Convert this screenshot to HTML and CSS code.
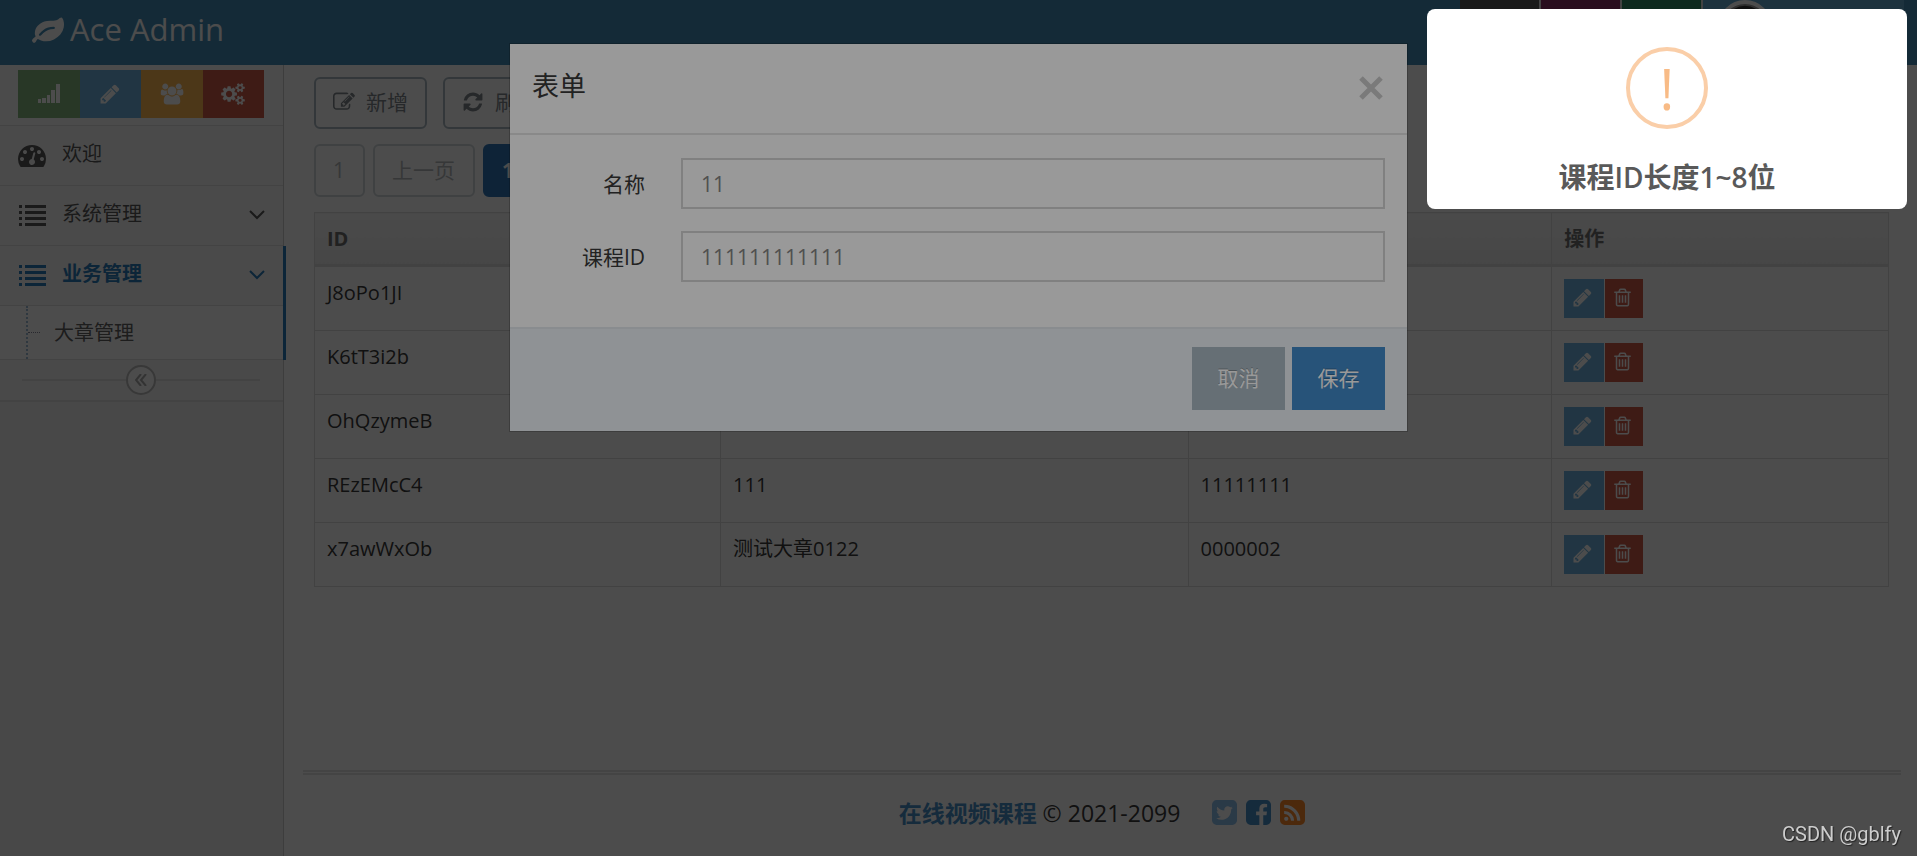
FILE: index.html
```html
<!DOCTYPE html>
<html lang="zh-CN">
<head>
<meta charset="utf-8">
<title>Ace Admin</title>
<link rel="stylesheet" href="styles.css">
</head>
<body>
<svg class="sprite" aria-hidden="true">
  <symbol id="i-leaf" viewBox="0 0 1792 1792"><path d="M1280 832q0-26-19-45t-45-19q-172 0-318 49.5t-259.5 134-235.5 219.5q-19 21-19 45 0 26 19 45t45 19q24 0 45-19 27-24 74-71t67-66q137-124 268.5-176t313.5-52q26 0 45-19t19-45zm512-198q0 95-20 193-46 224-184.5 383t-357.5 268q-214 108-438 108-148 0-286-47-15-5-88-42t-96-37q-16 0-39.5 32t-45 70-52.5 70-60 32q-43 0-63.5-17.5t-45.5-59.5q-2-4-6-11t-5.5-10-3-9.5-1.5-13.5q0-35 31-73.5t68-65.5 68-56 31-48q0-4-14-38t-16-44q-9-51-9-104 0-115 43.5-220t119-184.5 170.5-139 204-95.5q55-18 145-25.5t179.5-9 178.5-6 163.5-24 113.5-56.5l29.5-29.5 29.5-28 27-20 36.5-16 43.5-4.5q39 0 70.5 46t47.5 112 24 124 8 96z"/></symbol>
  <symbol id="i-signal" viewBox="0 0 22 22"><path d="M0 16h3v4H0zM4 15h4v5H4zM9 12h3v8H9zM13 7h4v13h-4zM18 1h4v19h-4z"/></symbol>
  <symbol id="i-pencil" viewBox="0 0 1792 1792"><path d="M491 1536l91-91-235-235-91 91v107h128v128h107zm523-928q0-22-22-22-10 0-17 7l-542 542q-7 7-7 17 0 22 22 22 10 0 17-7l542-542q7-7 7-17zm-54-192l416 416-832 832h-416v-416zm683 96q0 53-37 90l-166 166-416-416 166-165q36-38 90-38 53 0 91 38l235 234q37 39 37 91z"/></symbol>
  <symbol id="i-users" viewBox="0 0 2048 1792"><path d="M657 896q-162 5-265 128h-134q-82 0-138-40.5t-56-118.5q0-353 124-353 6 0 43.5 21t97.5 42.5 119 21.5q67 0 133-23-5 37-5 66 0 159 81 256zm1071 637q0 120-73 189.5t-194 69.5h-874q-121 0-194-69.5t-73-189.5q0-53 3.500-103.500t14-109 26.500-108.500 43-97.500 62-81 85.500-53.500 111.500-20q10 0 43 21.500t73 48 107 48 135 21.500 135-21.500 107-48 73-48 43-21.500q61 0 111.500 20t85.500 53.500 62 81 43 97.500 26.500 108.500 14 109 3.500 103.500zm-1024-1277q0 106-75 181t-181 75-181-75-75-181 75-181 181-75 181 75 75 181zm704 384q0 159-112.500 271.500t-271.500 112.500-271.500-112.500-112.500-271.500 112.500-271.500 271.500-112.500 271.500 112.500 112.500 271.500zm576 225q0 78-56 118.500t-138 40.500h-134q-103-123-265-128 93-143 93-302 0-29-5-66 66 23 133 23 59 0 119-21.500t97.500-42.500 43.500-21q124 0 124 353zm-128-609q0 106-75 181t-181 75-181-75-75-181 75-181 181-75 181 75 75 181z"/></symbol>
  <symbol id="i-cogs" viewBox="0 0 1920 1792"><path d="M896 896q0-106-75-181t-181-75-181 75-75 181 75 181 181 75 181-75 75-181zm768 512q0-52-38-90t-90-38-90 38-38 90q0 53 37.500 90.500t90.500 37.500 90.500-37.500 37.500-90.500zm0-1024q0-52-38-90t-90-38-90 38-38 90q0 53 37.500 90.500t90.500 37.500 90.500-37.500 37.500-90.500zm-384 421v185q0 10-7 19.500t-16 10.500l-155 24q-11 35-32 76 34 48 90 115 7 11 7 20 0 12-7 19-23 30-82.500 89.500t-78.500 59.500q-11 0-21-7l-115-90q-37 19-77 31-11 108-23 155-7 24-30 24h-186q-11 0-20-7.500t-10-17.500l-23-153q-34-10-75-31l-118 89q-7 7-20 7-11 0-21-8-144-133-144-160 0-9 7-19 10-14 41-53t47-61q-23-44-35-82l-152-24q-10-1-17-9.500t-7-19.500v-185q0-10 7-19.500t16-10.500l155-24q11-35 32-76-34-48-90-115-7-11-7-20 0-12 7-20 22-30 82-89t79-59q11 0 21 7l115 90q34-18 77-32 11-108 23-154 7-24 30-24h186q11 0 20 7.500t10 17.500l23 153q34 10 75 31l118-89q8-7 20-7 11 0 21 8 144 133 144 160 0 8-7 19-12 16-42 54t-45 60q23 48 34 82l152 23q10 2 17 10.500t7 19.500zm640 533v140q0 16-149 31-12 27-30 52 51 113 51 138 0 4-4 7-122 71-124 71-8 0-46-47t-52-68q-20 2-30 2t-30-2q-14 21-52 68t-46 47q-2 0-124-71-4-3-4-7 0-25 51-138-18-25-30-52-149-15-149-31v-140q0-16 149-31 13-29 30-52-51-113-51-138 0-4 4-7 4-2 35-20t59-34 30-16q8 0 46 46.500t52 67.500q20-2 30-2t30 2q51-71 92-112l6-2q4 0 124 70 4 3 4 7 0 25-51 138 17 23 30 52 149 15 149 31zm0-1024v140q0 16-149 31-12 27-30 52 51 113 51 138 0 4-4 7-122 71-124 71-8 0-46-47t-52-68q-20 2-30 2t-30-2q-14 21-52 68t-46 47q-2 0-124-71-4-3-4-7 0-25 51-138-18-25-30-52-149-15-149-31v-140q0-16 149-31 13-29 30-52-51-113-51-138 0-4 4-7 4-2 35-20t59-34 30-16q8 0 46 46.500t52 67.500q20-2 30-2t30 2q51-71 92-112l6-2q4 0 124 70 4 3 4 7 0 25-51 138 17 23 30 52 149 15 149 31z"/></symbol>
  <symbol id="i-gauge" viewBox="0 0 1792 1792"><path d="M384 1152q0-53-37.500-90.500t-90.500-37.500-90.500 37.500-37.500 90.500 37.500 90.500 90.500 37.500 90.500-37.500 37.500-90.500zm192-448q0-53-37.500-90.500t-90.500-37.500-90.500 37.500-37.500 90.500 37.500 90.500 90.500 37.500 90.500-37.500 37.500-90.500zm428 481l101-382q6-26-7.500-48.500t-38.500-29.500-48 6.500-30 39.500l-101 382q-60 5-107 43.500t-63 98.500q-20 77 20 146t117 89 146-20 89-117q16-60-6-117t-72-91zm660-33q0-53-37.500-90.500t-90.500-37.500-90.500 37.500-37.500 90.500 37.500 90.500 90.500 37.500 90.500-37.500 37.500-90.500zm-640-640q0-53-37.500-90.500t-90.500-37.500-90.500 37.500-37.500 90.500 37.500 90.500 90.500 37.500 90.500-37.500 37.500-90.500zm448 192q0-53-37.500-90.500t-90.500-37.500-90.500 37.500-37.500 90.500 37.500 90.500 90.500 37.500 90.500-37.500 37.500-90.500zm320 448q0 261-141 483-19 29-54 29h-1402q-35 0-54-29-141-221-141-483 0-182 71-348t191-286 286-191 348-71 348 71 286 191 191 286 71 348z"/></symbol>
  <symbol id="i-list" viewBox="0 0 28 28"><path d="M1 4h3v3H1zM7 4h21v3H7zM1 10h3v3H1zM7 10h21v3H7zM1 16h3v3H1zM7 16h21v3H7zM1 22h3v3H1zM7 22h21v3H7z"/></symbol>
  <symbol id="i-down" viewBox="0 0 16 10"><path d="M1 1l7 7 7-7" fill="none" stroke="currentColor" stroke-width="2"/></symbol>
  <symbol id="i-left2" viewBox="0 0 12 12"><path d="M6 0L1 6l5 6M11 0L6 6l5 6" fill="none" stroke="currentColor" stroke-width="2"/></symbol>
  <symbol id="i-edit" viewBox="0 0 1792 1792"><path d="M888 1184l116-116-152-152-116 116v56h96v96h56zm440-720q-16-16-33 1l-350 350q-17 17-1 33t33-1l350-350q17-17 1-33zm80 594v190q0 119-84.500 203.500t-203.500 84.500h-832q-119 0-203.500-84.500t-84.500-203.500v-832q0-119 84.500-203.500t203.500-84.500h832q63 0 117 25 15 7 18 23 3 17-9 29l-49 49q-14 14-32 8-23-6-45-6h-832q-66 0-113 47t-47 113v832q0 66 47 113t113 47h832q66 0 113-47t47-113v-126q0-13 9-22l64-64q15-15 35-7t20 29zm-96-738l288 288-672 672h-288v-288zm444 132l-92 92-288-288 92-92q28-28 68-28t68 28l152 152q28 28 28 68t-28 68z"/></symbol>
  <symbol id="i-refresh" viewBox="0 0 1792 1792"><path d="M1639 1056q0 5-1 7-64 268-268 434.500t-478 166.500q-146 0-282.500-55t-243.500-157l-129 129q-19 19-45 19t-45-19-19-45v-448q0-26 19-45t45-19h448q26 0 45 19t19 45-19 45l-137 137q71 66 161 102t187 36q134 0 250-65t186-179q11-17 53-117 8-23 30-23h192q13 0 22.500 9.500t9.500 22.500zm25-800v448q0 26-19 45t-45 19h-448q-26 0-45-19t-19-45 19-45l138-138q-148-137-349-137-134 0-250 65t-186 179q-11 17-53 117-8 23-30 23h-199q-13 0-22.500-9.500t-9.500-22.500v-7q65-268 270-434.500t480-166.500q146 0 284 55.500t245 156.500l130-129q19-19 45-19t45 19 19 45z"/></symbol>
  <symbol id="i-trash" viewBox="0 0 1792 1792"><path d="M704 736v576q0 14-9 23t-23 9h-64q-14 0-23-9t-9-23v-576q0-14 9-23t23-9h64q14 0 23 9t9 23zm256 0v576q0 14-9 23t-23 9h-64q-14 0-23-9t-9-23v-576q0-14 9-23t23-9h64q14 0 23 9t9 23zm256 0v576q0 14-9 23t-23 9h-64q-14 0-23-9t-9-23v-576q0-14 9-23t23-9h64q14 0 23 9t9 23zm128 724v-948h-896v948q0 22 7 40.500t14.500 27 10.500 8.500h832q3 0 10.500-8.500t14.500-27 7-40.500zm-672-1076h448l-48-117q-7-9-17-11h-317q-10 2-17 11zm928 32v64q0 14-9 23t-23 9h-96v948q0 83-47 143.500t-113 60.500h-832q-66 0-113-58.500t-47-141.500v-952h-96q-14 0-23-9t-9-23v-64q0-14 9-23t23-9h309l70-167q15-37 54-63t79-26h320q40 0 79 26t54 63l70 167h309q14 0 23 9t9 23z"/></symbol>
  <symbol id="i-twitter" viewBox="128 128 1536 1536"><path d="M1408 610q-56 25-121 34 68-40 93-117-65 38-134 51-61-66-153-66-87 0-148.500 61.500t-61.500 148.500q0 29 5 48-129-7-242-65t-192-155q-29 50-29 106 0 114 91 175-47-1-100-26v2q0 75 50 133.500t123 72.500q-29 8-51 8-13 0-39-4 21 63 74.500 104t121.500 42q-116 90-261 90-26 0-50-3 148 94 322 94 112 0 210-35.500t168-95 120.500-137 75-162 24.500-168.500q0-18-1-27 63-45 105-109zm256-194v960q0 119-84.500 203.500t-203.500 84.500h-960q-119 0-203.500-84.500t-84.500-203.500v-960q0-119 84.500-203.500t203.500-84.500h960q119 0 203.500 84.500t84.500 203.500z"/></symbol>
  <symbol id="i-facebook" viewBox="128 128 1536 1536"><path d="M1376 128q119 0 203.500 84.500t84.500 203.500v960q0 119-84.500 203.500t-203.500 84.500h-188v-595h199l30-232h-229v-148q0-56 23.500-84t91.500-28l122-1v-207q-63-9-178-9-136 0-217.500 80t-81.500 226v171h-200v232h200v595h-532q-119 0-203.500-84.500t-84.500-203.500v-960q0-119 84.500-203.500t203.500-84.500h960z"/></symbol>
  <symbol id="i-rss" viewBox="128 128 1536 1536"><path d="M640 1280q0-53-37.500-90.500t-90.500-37.500-90.500 37.500-37.500 90.500 37.500 90.500 90.500 37.500 90.500-37.500 37.500-90.500zm351 94q-13-232-177-396t-396-177q-14-1-24 9t-10 23v128q0 13 8.500 22t21.500 10q154 11 264 121t121 264q1 13 10 21.500t22 8.500h128q13 0 23-10t9-24zm384 1q-5-154-56-297.500t-139.500-260-205-205-260-139.500-297.500-56q-14-1-23 9-10 10-10 23v128q0 13 9 22t22 10q204 7 378 111.500t278.500 278.500 111.500 378q1 13 10 22t22 9h128q13 0 23-10 11-9 9-23zm289-959v960q0 119-84.500 203.500t-203.500 84.500h-960q-119 0-203.500-84.500t-84.500-203.500v-960q0-119 84.500-203.500t203.500-84.500h960q119 0 203.500 84.500t84.500 203.500z"/></symbol>
  <symbol id="i-close" viewBox="0 0 24 24"><path d="M2 2l20 20M22 2L2 22" fill="none" stroke="currentColor" stroke-width="5"/></symbol>
</svg>

<header class="navbar">
  <a class="brand" href="#"><svg class="brand-icon"><use href="#i-leaf"/></svg>Ace Admin</a>
  <nav class="nav-tools" aria-label="用户">
    <a class="tool grey" href="#" aria-label="任务"></a>
    <a class="tool purple" href="#" aria-label="通知"></a>
    <a class="tool green" href="#" aria-label="消息"></a>
    <a class="tool user" href="#" aria-label="账户"><svg class="avatar" viewBox="0 0 54 54"><circle cx="27" cy="27" r="25" fill="#999" stroke="#fff" stroke-width="4"/><path d="M9 17a20 20 0 0 1 36 0q-18-8-36 0z" fill="#333"/></svg></a>
  </nav>
</header>

<div class="main">
  <aside class="sidebar">
    <div class="shortcuts">
      <button class="short success" type="button" aria-label="统计"><svg><use href="#i-signal"/></svg></button>
      <button class="short info" type="button" aria-label="编辑"><svg><use href="#i-pencil"/></svg></button>
      <button class="short warning" type="button" aria-label="用户"><svg><use href="#i-users"/></svg></button>
      <button class="short danger" type="button" aria-label="设置"><svg><use href="#i-cogs"/></svg></button>
    </div>
    <ul class="menu">
      <li><a href="#"><svg class="mi"><use href="#i-gauge"/></svg><span>欢迎</span></a></li>
      <li><a href="#"><svg class="mi"><use href="#i-list"/></svg><span>系统管理</span><svg class="arrow"><use href="#i-down"/></svg></a></li>
      <li class="open"><a href="#"><svg class="mi"><use href="#i-list"/></svg><span>业务管理</span><svg class="arrow"><use href="#i-down"/></svg></a>
        <ul class="submenu"><li><a href="#">大章管理</a></li></ul>
      </li>
    </ul>
    <div class="collapse"><button type="button" aria-label="收起"><svg><use href="#i-left2"/></svg></button></div>
  </aside>

  <main class="content">
    <div class="toolbar">
      <button class="btn-white" type="button"><svg><use href="#i-edit"/></svg>新增</button>
      <button class="btn-white" type="button"><svg><use href="#i-refresh"/></svg>刷新</button>
    </div>
    <div class="pager">
      <button type="button" disabled>1</button>
      <button type="button" disabled>上一页</button>
      <button class="current" type="button">1</button>
    </div>
    <table class="grid">
      <colgroup><col class="c1"><col class="c2"><col class="c3"><col class="c4"></colgroup>
      <thead><tr><th>ID</th><th></th><th></th><th>操作</th></tr></thead>
      <tbody>
        <tr><td>J8oPo1JI</td><td></td><td></td><td><div class="ops"><button class="op-edit" type="button" aria-label="编辑"><svg><use href="#i-pencil"/></svg></button><button class="op-del" type="button" aria-label="删除"><svg><use href="#i-trash"/></svg></button></div></td></tr>
        <tr><td>K6tT3i2b</td><td></td><td></td><td><div class="ops"><button class="op-edit" type="button" aria-label="编辑"><svg><use href="#i-pencil"/></svg></button><button class="op-del" type="button" aria-label="删除"><svg><use href="#i-trash"/></svg></button></div></td></tr>
        <tr><td>OhQzymeB</td><td></td><td></td><td><div class="ops"><button class="op-edit" type="button" aria-label="编辑"><svg><use href="#i-pencil"/></svg></button><button class="op-del" type="button" aria-label="删除"><svg><use href="#i-trash"/></svg></button></div></td></tr>
        <tr><td>REzEMcC4</td><td>111</td><td>11111111</td><td><div class="ops"><button class="op-edit" type="button" aria-label="编辑"><svg><use href="#i-pencil"/></svg></button><button class="op-del" type="button" aria-label="删除"><svg><use href="#i-trash"/></svg></button></div></td></tr>
        <tr><td>x7awWxOb</td><td>测试大章0122</td><td>0000002</td><td><div class="ops"><button class="op-edit" type="button" aria-label="编辑"><svg><use href="#i-pencil"/></svg></button><button class="op-del" type="button" aria-label="删除"><svg><use href="#i-trash"/></svg></button></div></td></tr>
      </tbody>
    </table>
    <footer class="footer">
      <span><b>在线视频课程</b> © 2021-2099</span>
      <span class="social">
        <a class="tw" href="#" aria-label="Twitter"><svg><use href="#i-twitter"/></svg></a>
        <a class="fb" href="#" aria-label="Facebook"><svg><use href="#i-facebook"/></svg></a>
        <a class="rss" href="#" aria-label="RSS"><svg><use href="#i-rss"/></svg></a>
      </span>
    </footer>
  </main>
</div>

<div class="modal-layer">
  <form class="modal" role="dialog" aria-labelledby="modal-title">
    <div class="modal-head">
      <h4 id="modal-title">表单</h4>
      <button class="close" type="button" aria-label="关闭"><svg><use href="#i-close"/></svg></button>
    </div>
    <div class="modal-body">
      <label for="name">名称</label><input id="name" type="text" value="11">
      <label for="course">课程ID</label><input id="course" type="text" value="111111111111">
    </div>
    <div class="modal-foot">
      <button class="cancel" type="button">取消</button>
      <button class="save" type="button">保存</button>
    </div>
  </form>
</div>

<div class="toast-layer">
  <div class="toast" role="alert">
    <div class="toast-icon">!</div>
    <h2>课程<span>ID</span>长度<span>1~8</span>位</h2>
  </div>
</div>
<div class="watermark">CSDN @gblfy</div>
</body>
</html>
```
FILE: styles.css
```css
* { box-sizing: border-box; }
body {
  margin: 0;
  min-height: 100vh;
  display: flex;
  flex-direction: column;
  background: #fff;
  color: #393939;
  font: 20px/30px "Open Sans", "Noto Sans CJK SC", sans-serif;
}
button, input { font: inherit; color: inherit; margin: 0; }
button { border: 0; padding: 0; display: flex; align-items: center; justify-content: center; }
a { color: inherit; text-decoration: none; }
ul { list-style: none; margin: 0; padding: 0; }
svg { display: block; fill: currentColor; flex: none; }
.sprite { position: absolute; width: 0; height: 0; }

/* top bar */
.navbar { height: 65px; background: #438eb9; display: flex; justify-content: space-between; padding: 0 13px 0 32px; }
.brand { display: flex; align-items: center; gap: 6px; padding-bottom: 8px; color: #fff; font-size: 31px; }
.brand-icon { width: 32px; height: 32px; }
.nav-tools { display: flex; gap: 2px; background: #e1e1e1; }
.tool { width: 79px; }
.grey { background: #555; }
.purple { background: #892e65; }
.green { background: #2e8965; }
.user { width: 201px; background: #62a8d1; padding-left: 15px; }
.avatar { width: 54px; height: 54px; }

/* sidebar */
.main { flex: 1; display: flex; }
.sidebar { width: 284px; flex: none; background: #f2f2f2; border-right: 1px solid #ccc; }
.shortcuts { display: flex; padding: 5px 19px 7px 18px; background: #fafafa; border-bottom: 1px solid #e0e0e0; }
.short { flex: 1; height: 48px; color: #fff; }
.short svg { width: 22px; height: 22px; }
.short:nth-child(n+3) svg { width: 24px; }
.success { background: #87b87f; }
.info { background: #6fb3e0; }
.warning { background: #ffb752; }
.danger { background: #d15b47; }
.menu > li > a { display: flex; align-items: center; height: 60px; padding: 0 18px 1px; gap: 16px; background: #f8f8f8; border-bottom: 1px solid #e0e0e0; color: #585858; }
.menu span { flex: 1; padding-bottom: 2px; }
.mi { width: 28px; height: 28px; }
.arrow { width: 16px; height: 10px; }
.open { margin-right: -3px; border-right: 3px solid #2b7dbc; }
.open > a { color: #2b7dbc !important; font-weight: bold; }
.submenu { background: #fff; border-bottom: 1px solid #e0e0e0; padding-left: 26px; }
.submenu li { border-left: 2px dotted #9dbdd6; height: 53px; display: flex; align-items: center; }
.submenu li::before { content: ""; width: 12px; border-top: 1px dotted #889; margin-right: 14px; }
.submenu a { color: #616161; }
.collapse { display: flex; align-items: center; height: 42px; padding: 0 23px 0 22px; background: #f3f3f3; border-bottom: 2px solid #e0e0e0; }
.collapse::before, .collapse::after { content: ""; flex: 1; height: 2px; background: #e0e0e0; }
.collapse button { width: 30px; height: 30px; border: 2px solid #bbb; border-radius: 50%; background: #fff; color: #aaa; }
.collapse svg { width: 12px; height: 12px; }

/* page content */
.content { flex: 1; min-width: 0; display: flex; flex-direction: column; padding: 12px 16px 0 19px; }
.toolbar { display: flex; gap: 16px; padding: 0 11px; }
.btn-white, .pager button { border: 2px solid #abbac3; border-radius: 6px; background: #fff; color: #80878c; font-size: 21px; }
.btn-white { height: 52px; padding: 0 17px 2px; gap: 11px; }
.btn-white svg { width: 22px; height: 22px; }
.pager { display: flex; gap: 8px; padding: 15px 11px; }
.pager button { height: 53px; padding: 0 18px 2px 17px; border-color: #d3dadd; color: #b5babd; }
.pager .current { border-color: #2f77b9; background: #2f77b9; color: #fff; font-weight: bold; }
.grid { margin: 0 12px 0 11px; border-collapse: collapse; table-layout: fixed; }
.c1 { width: 25.8%; }
.c2 { width: 29.7%; }
.c3 { width: 23.1%; }
.c4 { width: 21.4%; }
.grid th, .grid td { border: 1px solid #ddd; padding: 12px; text-align: left; vertical-align: top; line-height: 28px; font-size: 20px; }
.grid th { line-height: 30px; padding: 11px 12px 10px; color: #707070; background: linear-gradient(#f8f8f8, #ececec); border-bottom: 3px solid #ddd; }
.ops { display: flex; gap: 1px; }
.ops button { height: 39px; color: #fff; padding-bottom: 2px; }
.ops svg { width: 21px; height: 21px; }
.op-edit { width: 40px; background: #6fb3e0; padding-right: 3px; }
.op-del { width: 38px; background: #d15b47; padding-right: 3px; }
.footer { margin-top: auto; height: 86px; border-top: 5px double #e5e5e5; display: flex; justify-content: center; align-items: center; gap: 32px; padding-bottom: 5px; font-size: 23px; }
.footer b { color: #478fca; }
.social { display: flex; gap: 9px; padding-bottom: 2px; }
.social svg { width: 25px; height: 25px; }
.tw { color: #8cc1ed; }
.fb { color: #478fca; }
.rss { color: #ff892a; }

/* dialog */
.modal-layer { position: fixed; inset: 0; background: rgba(0, 0, 0, 0.5); }
.modal { width: 899px; max-width: 100%; margin: 43px auto; background: #fff; background-clip: padding-box; border: 1px solid rgba(0, 0, 0, 0.2); font-size: 21px; }
.modal-head { display: flex; justify-content: space-between; padding: 22px 22px 27px; border-bottom: 2px solid #e5e5e5; }
.modal-head h4 { margin: 0; font-size: 27px; line-height: 40px; font-weight: normal; }
.close { background: none; color: #ccc; padding: 4px 2px 0; }
.close svg { width: 24px; height: 24px; }
.modal-body { display: grid; grid-template-columns: 135px 1fr; column-gap: 36px; row-gap: 22px; align-items: center; padding: 23px 22px 45px 0; }
.modal-body label { text-align: right; }
.modal-body input { width: 100%; height: 51px; border: 2px solid #d5d5d5; background: #fff; color: #858585; padding: 0 18px; }
.modal-foot { display: flex; justify-content: flex-end; gap: 7px; padding: 18px 22px 21px; background: #eff3f8; border-top: 2px solid #e4e9ee; }
.modal-foot button { width: 93px; height: 63px; padding-bottom: 2px; color: #fff; text-shadow: 0 -1px 0 rgba(0, 0, 0, 0.25); }
.cancel { background: #abbac3; }
.save { background: #428bca; }

/* alert */
.toast-layer { position: fixed; inset: 0; background: rgba(0, 0, 0, 0.4); display: flex; justify-content: flex-end; align-items: flex-start; padding: 9px 10px; }
.toast { width: 480px; background: #fff; border-radius: 8px; padding: 38px 20px 12px; display: flex; flex-direction: column; align-items: center; gap: 28px; }
.toast-icon { width: 82px; height: 82px; border: 4px solid #facea8; border-radius: 50%; color: #f8bb86; font-size: 56px; line-height: 74px; text-align: center; }
.toast h2 { margin: 0; font-size: 28px; line-height: 40px; font-weight: bold; color: #595959; }
.toast h2 span { font-weight: 600; }
.watermark { position: fixed; right: 16px; bottom: 8px; color: #cdcdcd; font-family: Roboto, sans-serif; font-size: 20px; line-height: 28px; text-shadow: 1px 1px 1px #222; }
```
